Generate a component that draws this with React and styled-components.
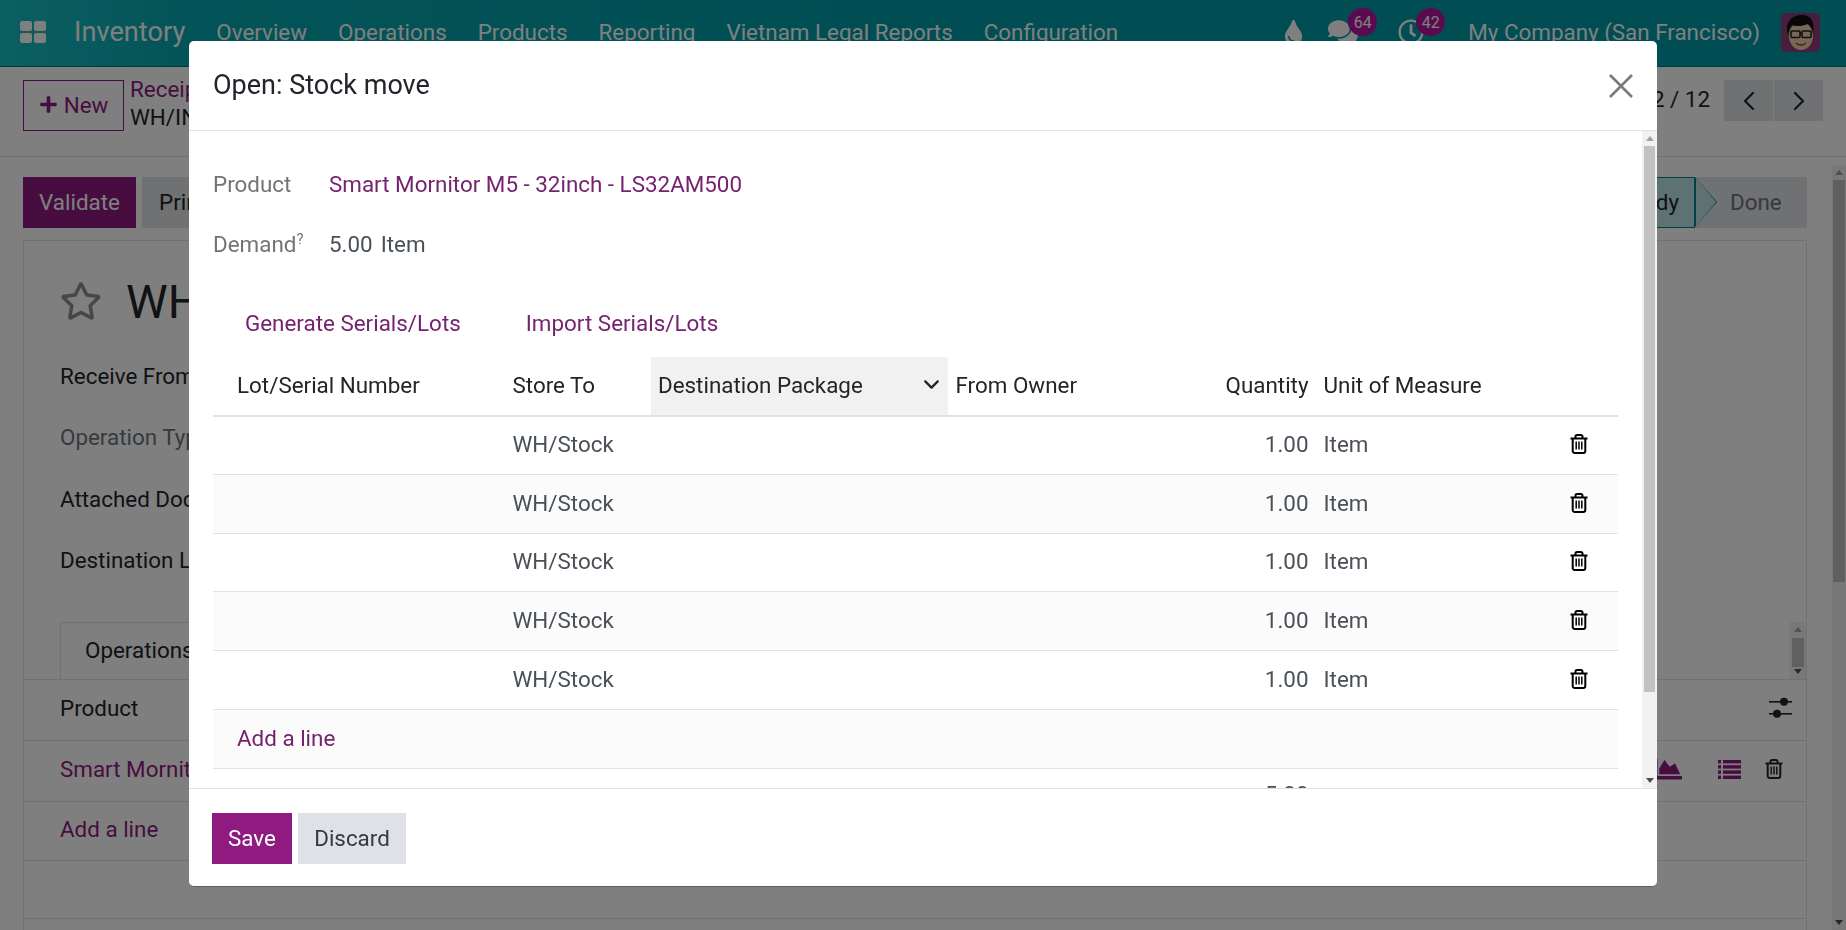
import React from "react"
import styled, { createGlobalStyle } from "styled-components"
import { FaComments, FaChartArea, FaPlus, FaRegStar, FaTint, FaRegClock } from "react-icons/fa"
import { ChevronDown, ChevronLeft, ChevronRight } from "lucide-react"

const menus = ["Overview", "Operations", "Products", "Reporting", "Vietnam Legal Reports", "Configuration"]
const moveLines = [1, 2, 3, 4, 5]
const columnWidths = [292, 146, 297, 230, 138, 226, 76]
const formFields = [
  { label: "Receive From" },
  { label: "Operation Type", muted: true },
  { label: "Attached Documents" },
  { label: "Destination Location" },
]

const GlobalStyle = createGlobalStyle`
  html, body {
    margin: 0;
    padding: 0;
    height: 100%;
    overflow: hidden;
    background: #fff;
  }
  body {
    font-family: Roboto, "Liberation Sans", sans-serif;
    font-size: 22.4px;
    color: #212529;
  }
  * { box-sizing: border-box; }
`

const GridIcon = () => (
  <svg width="26" height="22" viewBox="0 0 26 22" fill="currentColor">
    <rect x="0" y="0" width="12" height="10" rx="2" />
    <rect x="14" y="0" width="12" height="10" rx="2" />
    <rect x="0" y="12" width="12" height="10" rx="2" />
    <rect x="14" y="12" width="12" height="10" rx="2" />
  </svg>
)

const TrashIcon = () => (
  <svg width="18" height="20" viewBox="0 0 18 20" fill="none" stroke="currentColor" strokeWidth="2">
    <path d="M0.5 4.5H17.5" />
    <path d="M5.5 4.5V2.5A1.5 1.5 0 0 1 7 1H11A1.5 1.5 0 0 1 12.5 2.5V4.5" />
    <path d="M2.7 4.5V17A2 2 0 0 0 4.7 19H13.3A2 2 0 0 0 15.3 17V4.5" />
    <path d="M6.2 7.5V15.5M9 7.5V15.5M11.8 7.5V15.5" strokeWidth="1.5" />
  </svg>
)

const SlidersIcon = () => (
  <svg width="23" height="22" viewBox="0 0 23 22" fill="currentColor">
    <rect x="0" y="4" width="23" height="1.6" />
    <circle cx="15" cy="4.8" r="4" />
    <rect x="0" y="16" width="23" height="1.6" />
    <circle cx="8" cy="16.8" r="4" />
  </svg>
)

const ListIcon = () => (
  <svg width="23" height="19" viewBox="0 0 23 19" fill="currentColor">
    <rect x="0" y="0" width="3" height="3.4" />
    <rect x="5" y="0" width="18" height="3.4" />
    <rect x="0" y="5.2" width="3" height="3.4" />
    <rect x="5" y="5.2" width="18" height="3.4" />
    <rect x="0" y="10.4" width="3" height="3.4" />
    <rect x="5" y="10.4" width="18" height="3.4" />
    <rect x="0" y="15.6" width="3" height="3.4" />
    <rect x="5" y="15.6" width="18" height="3.4" />
  </svg>
)

const CloseIcon = () => (
  <svg width="24" height="24" viewBox="0 0 24 24" fill="none" stroke="currentColor" strokeWidth="2.6">
    <path d="M1 1L23 23M23 1L1 23" />
  </svg>
)

const Avatar = () => (
  <AvatarSvg viewBox="0 0 39 39">
    <rect width="39" height="39" fill="#8e3f78" />
    <ellipse cx="20" cy="23" rx="12" ry="14" fill="#f0cfa8" />
    <path d="M7 22C3 9 11 2 21 2c9 0 13 6 11 19-1-5-2-8-5-10-5 2-12 3-16 1-2 2-3 6-4 10z" fill="#14100f" />
    <rect x="10" y="18" width="9" height="6.5" rx="1" fill="none" stroke="#222" strokeWidth="1.6" />
    <rect x="21" y="18" width="9" height="6.5" rx="1" fill="none" stroke="#222" strokeWidth="1.6" />
    <path d="M19 20.5h2" stroke="#222" strokeWidth="1.4" />
    <path d="M15 30c3 2.5 7 2.5 10 0" fill="none" stroke="#7c4a30" strokeWidth="1.4" />
  </AvatarSvg>
)

const Scrollbar = ({ $width, $pad, $thumbTop, $thumbHeight, $inset }) => (
  <ScrollTrack $width={$width} $inset={$inset}>
    <ScrollArrow $up />
    <ScrollMiddle $pad={$pad}>
      <ScrollThumb $top={$thumbTop} $height={$thumbHeight} />
    </ScrollMiddle>
    <ScrollArrow />
  </ScrollTrack>
)

export default () => {
  return (
    <>
      <GlobalStyle />
      <Page>
        <Navbar>
          <AppsButton><GridIcon /></AppsButton>
          <AppName>Inventory</AppName>
          <MenuList>
            {menus.map(menu => <div key={menu}>{menu}</div>)}
          </MenuList>
          <Systray>
            <TrayIcon $width={47}><FaTint size={25} /></TrayIcon>
            <TrayIcon $width={70}>
              <FaComments size={30} />
              <Badge $left={20}>64</Badge>
            </TrayIcon>
            <TrayIcon $width={70}>
              <FaRegClock size={26} />
              <Badge $left={18}>42</Badge>
            </TrayIcon>
            <Company>My Company (San Francisco)</Company>
            <Avatar />
          </Systray>
        </Navbar>

        <ControlPanel>
          <NewButton><FaPlus size={19} /> New</NewButton>
          <Breadcrumb>
            <BreadcrumbLink>Receipts</BreadcrumbLink>
            <span>WH/IN/00012</span>
          </Breadcrumb>
          <Pager>2 / 12</Pager>
          <PagerButton><ChevronLeft size={32} strokeWidth={1.6} /></PagerButton>
          <PagerButton><ChevronRight size={32} strokeWidth={1.6} /></PagerButton>
        </ControlPanel>

        <Workspace>
          <Content>
            <StatusRow>
              <ValidateButton>Validate</ValidateButton>
              <PrintButton>Print</PrintButton>
              <StatusBar>
                <StatusReady>Ready</StatusReady>
                <StatusDone>Done</StatusDone>
              </StatusBar>
            </StatusRow>
            <Sheet>
              <SheetTitle>
                <FaRegStar size={42} color="#8a8f95" />
                <span>WH/IN/00012</span>
              </SheetTitle>
              {formFields.map(field => (
                <FormRow key={field.label} $muted={field.muted}>{field.label}</FormRow>
              ))}
              <TabRow>
                <Tab>Operations</Tab>
                <Scrollbar $width={16} $pad={2} $thumbTop={1} $thumbHeight={29} $inset />
              </TabRow>
              <LinesRow $height={61} $right={14}>
                <span>Product</span>
                <SlidersIcon />
              </LinesRow>
              <LinesRow $height={61} $right={23}>
                <SheetLink>Smart Mornitor M5 - 32inch - LS32AM500</SheetLink>
                <RowIcons>
                  <ChartLink><FaChartArea size={28} /></ChartLink>
                  <ListLink><ListIcon /></ListLink>
                  <TrashIcon />
                </RowIcons>
              </LinesRow>
              <LinesRow $height={59}><SheetLink>Add a line</SheetLink></LinesRow>
              <LinesRow $height={58} />
            </Sheet>
          </Content>
          <Scrollbar $width={14} $pad={1} $thumbTop={0} $thumbHeight={402} />
        </Workspace>
      </Page>

      <Backdrop />

      <Modal>
        <ModalHeader>
          <ModalTitle>Open: Stock move</ModalTitle>
          <CloseButton><CloseIcon /></CloseButton>
        </ModalHeader>
        <ModalBody>
          <ModalScroll>
            <FieldRow $top={35}>
              <FieldLabel>Product</FieldLabel>
              <LinkText>Smart Mornitor M5 - 32inch - LS32AM500</LinkText>
            </FieldRow>
            <FieldRow $top={23.5}>
              <FieldLabel>Demand<Help>?</Help></FieldLabel>
              <span>5.00</span>
              <DemandUnit>Item</DemandUnit>
            </FieldRow>
            <ActionRow>
              <LinkText>Generate Serials/Lots</LinkText>
              <LinkText>Import Serials/Lots</LinkText>
            </ActionRow>
            <MoveTable>
              <colgroup>
                {columnWidths.map((width, i) => <TableColumn key={i} $width={width} />)}
              </colgroup>
              <thead>
                <tr>
                  <HeadCell $first>Lot/Serial Number</HeadCell>
                  <HeadCell>Store To</HeadCell>
                  <SortedHead>
                    <HeadInner>Destination Package<ChevronDown size={25} strokeWidth={2.2} /></HeadInner>
                  </SortedHead>
                  <HeadCell>From Owner</HeadCell>
                  <HeadCell $right>Quantity</HeadCell>
                  <HeadCell colSpan={2}>Unit of Measure</HeadCell>
                </tr>
              </thead>
              <tbody>
                {moveLines.map(line => (
                  <LineRow key={line} $striped={line % 2 === 0}>
                    <Cell />
                    <Cell>WH/Stock</Cell>
                    <Cell />
                    <Cell />
                    <Cell $right>1.00</Cell>
                    <Cell>Item</Cell>
                    <TrashCell><TrashIcon /></TrashCell>
                  </LineRow>
                ))}
                <LineRow $striped>
                  <Cell colSpan={7} $first><LinkText>Add a line</LinkText></Cell>
                </LineRow>
              </tbody>
              <tfoot>
                <tr>
                  <FootCell colSpan={4} />
                  <FootCell $right>5.00</FootCell>
                  <FootCell colSpan={2} />
                </tr>
              </tfoot>
            </MoveTable>
          </ModalScroll>
          <Scrollbar $width={15} $pad={2} $thumbTop={0} $thumbHeight={546} />
        </ModalBody>
        <ModalFooter>
          <SaveButton>Save</SaveButton>
          <DiscardButton>Discard</DiscardButton>
        </ModalFooter>
      </Modal>
    </>
  )
}

const AvatarSvg = styled.svg`
  display: block;
  width: 39px;
  height: 39px;
  border-radius: 5px;
`

const ScrollTrack = styled.div`
  width: ${p => p.$width}px;
  flex: none;
  display: flex;
  flex-direction: column;
  background: #f1f1f1;
  ${p => p.$inset && "margin-left: auto; height: 57px;"}
`

const ScrollArrow = styled.div`
  flex: none;
  height: 15px;
  display: flex;
  align-items: center;
  justify-content: center;
  &::before {
    content: "";
    border-left: 4px solid transparent;
    border-right: 4px solid transparent;
    ${p => (p.$up ? "border-bottom: 5px solid #a3a3a3;" : "border-top: 5px solid #505050;")}
  }
`

const ScrollMiddle = styled.div`
  flex: 1;
  min-height: 0;
  padding: 0 ${p => p.$pad}px;
`

const ScrollThumb = styled.div`
  margin-top: ${p => p.$top}px;
  height: ${p => p.$height}px;
  background: #c1c1c1;
`

const Page = styled.div`
  height: 100vh;
  display: flex;
  flex-direction: column;
  overflow: hidden;
`

const Navbar = styled.nav`
  flex: none;
  height: 67px;
  display: flex;
  align-items: center;
  padding: 0 26px 2px 20px;
  color: #fff;
  background: linear-gradient(90deg, #16c0c4 0%, #06a8b0 10%, #009ca6 50%);
  border-bottom: 1px solid #00787f;
`

const AppsButton = styled.div`
  display: flex;
  width: 54px;
`

const AppName = styled.div`
  font-size: 27.2px;
  margin-right: 31px;
`

const MenuList = styled.div`
  display: flex;
  gap: 31px;
`

const Systray = styled.div`
  margin-left: auto;
  display: flex;
  align-items: center;
`

const TrayIcon = styled.div`
  position: relative;
  width: ${p => p.$width}px;
  height: 28px;
  display: flex;
  align-items: center;
`

const Badge = styled.span`
  position: absolute;
  top: -10px;
  left: ${p => p.$left}px;
  width: 29px;
  height: 28px;
  display: grid;
  place-items: center;
  border-radius: 50%;
  font-size: 16px;
  background: #b8149f;
  color: #fff;
`

const Company = styled.div`
  margin-right: 21px;
`

const ControlPanel = styled.div`
  flex: none;
  height: 90px;
  display: flex;
  align-items: flex-start;
  padding: 13px 23px 0;
  background: #fff;
  border-bottom: 1px solid #dee2e6;
`

const NewButton = styled.div`
  width: 101px;
  height: 51px;
  padding-bottom: 2px;
  display: flex;
  align-items: center;
  justify-content: center;
  gap: 6px;
  color: #8f1a80;
  border: 1px solid #8f1a80;
`

const Breadcrumb = styled.div`
  margin: -5px 0 0 6px;
  display: flex;
  flex-direction: column;
  line-height: 28px;
`

const BreadcrumbLink = styled.span`
  color: #8f1a80;
`

const Pager = styled.div`
  margin-left: auto;
  margin-right: 13px;
  line-height: 38px;
`

const PagerButton = styled.div`
  width: 49px;
  height: 41px;
  margin-left: 1px;
  display: grid;
  place-items: center;
  background: #dee2e6;
`

const Workspace = styled.div`
  flex: 1;
  min-height: 0;
  display: flex;
  padding-top: 8px;
  background: #fff;
`

const Content = styled.div`
  flex: 1;
  min-width: 0;
  padding: 12px 25px 0 23px;
`

const StatusRow = styled.div`
  height: 51px;
  display: flex;
  gap: 6px;
`

const ValidateButton = styled.div`
  width: 113px;
  padding-bottom: 2px;
  display: grid;
  place-items: center;
  color: #fff;
  background: #8f1a80;
`

const PrintButton = styled.div`
  width: 90px;
  padding: 0 0 2px 17px;
  display: flex;
  align-items: center;
  background: #dee2e6;
`

const StatusBar = styled.div`
  margin-left: auto;
  display: flex;
  background: #dee2e6;
`

const StatusReady = styled.div`
  position: relative;
  width: 110px;
  padding: 0 0 2px 32px;
  display: flex;
  align-items: center;
  background: #bfe5e6;
  border: 1px solid #00878f;
  &::before, &::after {
    content: "";
    position: absolute;
    width: 0;
    height: 0;
  }
  &::before {
    top: -1px;
    right: -23px;
    border-top: 25.5px solid transparent;
    border-bottom: 25.5px solid transparent;
    border-left: 22px solid #00878f;
  }
  &::after {
    top: 0;
    right: -21.5px;
    border-top: 24.5px solid transparent;
    border-bottom: 24.5px solid transparent;
    border-left: 20.5px solid #bfe5e6;
  }
`

const StatusDone = styled.div`
  width: 112px;
  padding: 0 0 2px 35px;
  display: flex;
  align-items: center;
  color: #6c757d;
`

const Sheet = styled.div`
  margin-top: 12px;
  height: 700px;
  background: #fff;
  border: 1px solid #dee2e6;
  border-bottom: none;
`

const SheetTitle = styled.div`
  height: 86px;
  margin-top: 18px;
  padding: 0 0 2px 36px;
  display: flex;
  align-items: center;
  gap: 24px;
  font-size: 47px;
`

const FormRow = styled.div`
  height: 61.5px;
  padding-left: 36px;
  display: flex;
  align-items: center;
  color: ${p => (p.$muted ? "#6c757d" : "#212529")};
`

const TabRow = styled.div`
  height: 58px;
  margin-top: 31px;
  padding-left: 36px;
  display: flex;
  border-bottom: 1px solid #dee2e6;
`

const Tab = styled.div`
  width: 300px;
  padding: 0 0 2px 24px;
  display: flex;
  align-items: center;
  background: #fff;
  border: 1px solid #dee2e6;
  border-bottom: none;
`

const LinesRow = styled.div`
  height: ${p => p.$height}px;
  padding: 0 ${p => p.$right ?? 36}px 4px 36px;
  display: flex;
  align-items: center;
  justify-content: space-between;
  border-bottom: 1px solid #dee2e6;
`

const RowIcons = styled.div`
  display: flex;
  align-items: center;
`

const LinkText = styled.span`
  color: #75236f;
`

const SheetLink = styled.span`
  color: #8f1a80;
`

const ChartLink = styled(SheetLink)`
  display: flex;
  margin-right: 36px;
`

const ListLink = styled(SheetLink)`
  display: flex;
  margin-right: 24px;
`

const Backdrop = styled.div`
  position: fixed;
  inset: 0;
  background: rgba(0, 0, 0, 0.5);
`

const Modal = styled.div`
  position: fixed;
  left: 189px;
  top: 41px;
  width: 1468px;
  height: 846px;
  display: flex;
  flex-direction: column;
  background: #fff;
  border-radius: 5px;
  border-bottom: 1px solid #5c5c5c;
  overflow: hidden;
`

const ModalHeader = styled.div`
  flex: none;
  height: 90px;
  padding: 0 24px 2px;
  display: flex;
  align-items: center;
  justify-content: space-between;
  border-bottom: 1px solid #dee2e6;
`

const ModalTitle = styled.div`
  font-size: 27px;
  color: #212529;
`

const CloseButton = styled.div`
  margin-top: 2px;
  color: #7a7a7a;
  display: flex;
`

const ModalBody = styled.div`
  flex: 1;
  min-height: 0;
  display: flex;
`

const ModalScroll = styled.div`
  flex: 1;
  min-width: 0;
  overflow: hidden;
  padding: 0 24px;
`

const FieldRow = styled.div`
  margin-top: ${p => p.$top}px;
  height: 36px;
  display: flex;
  align-items: center;
  color: #495057;
`

const FieldLabel = styled.div`
  width: 116px;
  color: #737373;
`

const Help = styled.sup`
  font-size: 15px;
  line-height: 0;
`

const DemandUnit = styled.span`
  margin-left: 8px;
`

const ActionRow = styled.div`
  margin-top: 43px;
  padding-left: 32px;
  height: 36px;
  display: flex;
  align-items: center;
  gap: 65px;
`

const MoveTable = styled.table`
  margin-top: 16px;
  width: 1405px;
  table-layout: fixed;
  border-collapse: collapse;
`

const TableColumn = styled.col`
  width: ${p => p.$width}px;
`

const HeadCell = styled.th`
  height: 59px;
  padding: 0 7.5px 2px;
  padding-left: ${p => (p.$first ? "24px" : "7.5px")};
  font-weight: 400;
  text-align: ${p => (p.$right ? "right" : "left")};
  color: #212529;
  border-bottom: 2px solid #dee2e6;
`

const SortedHead = styled(HeadCell)`
  padding: 0 4px 2px 7px;
  background: #f1f1f2;
`

const HeadInner = styled.div`
  display: flex;
  align-items: center;
  justify-content: space-between;
`

const LineRow = styled.tr`
  height: 58.75px;
  background: ${p => (p.$striped ? "#fbfbfb" : "#fff")};
`

const Cell = styled.td`
  padding: 0 7.5px 2px;
  padding-left: ${p => (p.$first ? "24px" : "7.5px")};
  text-align: ${p => (p.$right ? "right" : "left")};
  color: #495057;
  border-bottom: 1px solid #dee2e6;
`

const TrashCell = styled(Cell)`
  padding-right: 9px;
  color: #000;
  svg { display: block; margin: 0 auto; }
`

const FootCell = styled.td`
  height: 52px;
  padding: 0 7.5px;
  text-align: ${p => (p.$right ? "right" : "left")};
  color: #495057;
`

const ModalFooter = styled.div`
  flex: none;
  height: 98px;
  padding: 24px 23px 0;
  display: flex;
  align-items: flex-start;
  gap: 6px;
  border-top: 1px solid #dee2e6;
`

const SaveButton = styled.div`
  width: 80px;
  height: 51px;
  padding-bottom: 2px;
  display: grid;
  place-items: center;
  color: #fff;
  background: #8f1a80;
`

const DiscardButton = styled.div`
  width: 108px;
  height: 51px;
  padding-bottom: 2px;
  display: grid;
  place-items: center;
  color: #343a40;
  background: #dee2e6;
`
